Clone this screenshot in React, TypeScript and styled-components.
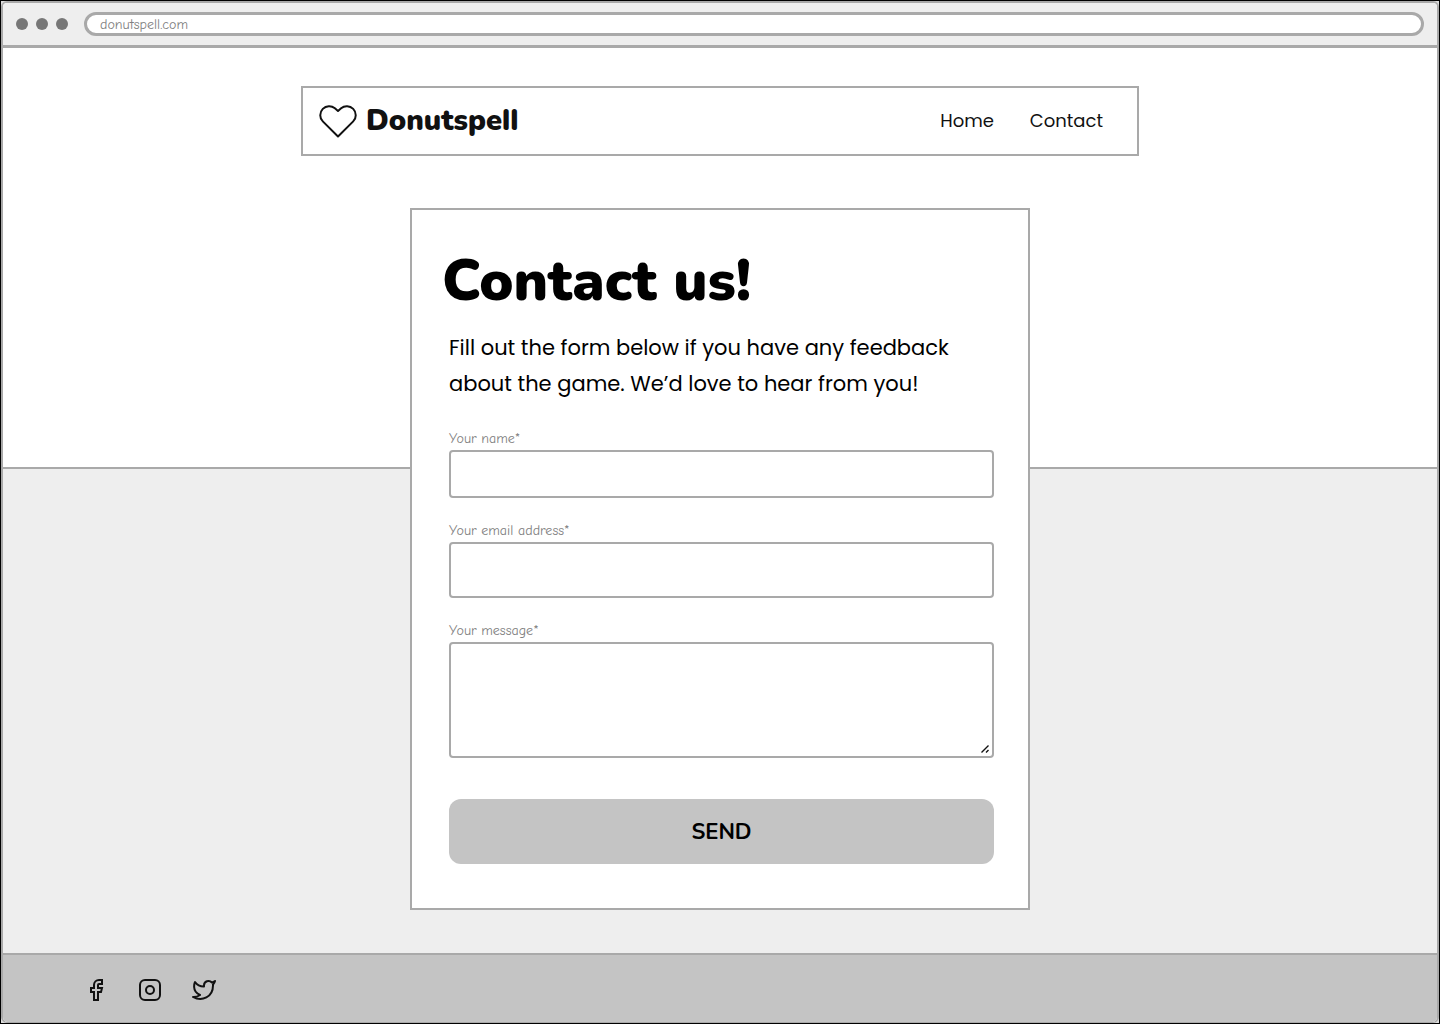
import React from "react";
import styled, { createGlobalStyle } from "styled-components";

const line = "#a9a9a9";
const display = `Nunito, Lato, "Open Sans", sans-serif`;
const copy = `Poppins, Inter, "Liberation Sans", sans-serif`;
const hand = `"Comic Neue", "Open Sans", "Noto Sans", sans-serif`;

const GlobalStyle = createGlobalStyle`
  *, *::before, *::after { box-sizing: border-box; }
  body { margin: 0; background: #fff; color: #000; font-family: ${copy}; }
`;

const Outline = styled.div`
  display: flex;
  flex-direction: column;
  min-height: 100vh;
  border: 1px solid #000;
  background: #ddd;
`;

const BrowserFrame = styled.div`
  flex: 1;
  display: flex;
  flex-direction: column;
  border: 2px solid ${line};
  border-bottom-width: 1px;
  border-radius: 6px;
  background: #fff;
  overflow: hidden;
`;

const BrowserBar = styled.div`
  display: flex;
  align-items: center;
  gap: 16px;
  height: 45px;
  padding: 0 13px;
  background: #eee;
  border-bottom: 3px solid ${line};
`;

const Dots = styled.div`
  display: flex;
  gap: 8px;
`;

const Dot = styled.span`
  width: 12px;
  height: 12px;
  border-radius: 50%;
  background: #777;
`;

const Address = styled.input`
  flex: 1;
  min-width: 0;
  height: 24px;
  padding: 0 13px;
  border: 3px solid ${line};
  border-radius: 12px;
  background: #fff;
  color: #808080;
  font: 400 14px/18px ${hand};
`;

const Main = styled.main`
  flex: 1;
  display: flex;
  flex-direction: column;
  align-items: center;
  gap: 52px;
  padding: 38px 24px 43px;
  background: linear-gradient(#fff 419px, ${line} 419px 421px, #eee 421px);
`;

const SiteHeader = styled.header`
  display: flex;
  align-items: center;
  justify-content: space-between;
  width: 100%;
  max-width: 838px;
  height: 70px;
  padding: 0 34px 0 15px;
  border: 2px solid ${line};
  background: #fff;
`;

const Brand = styled.a`
  display: flex;
  align-items: center;
  gap: 8px;
  color: #111;
  font: 900 29px/40px ${display};
  font-feature-settings: "ss01", "ss02";
  text-decoration: none;
`;

const Nav = styled.nav`
  display: flex;
  gap: 36px;
`;

const NavLink = styled.a`
  color: #111;
  font-size: 18px;
  line-height: 28px;
  text-decoration: none;
`;

const Card = styled.section`
  width: 100%;
  max-width: 620px;
  padding: 35px 34px 44px 30px;
  border: 2px solid ${line};
  background: #fff;
`;

const Title = styled.h1`
  margin: 0;
  font: 900 57px/72px ${display};
`;

const CardBody = styled.div`
  display: flex;
  flex-direction: column;
  gap: 26px;
  padding: 13px 0 0 7px;
`;

const Intro = styled.p`
  margin: 0;
  font-size: 21px;
  line-height: 36px;
`;

const Form = styled.form`
  display: flex;
  flex-direction: column;
  gap: 22px;
`;

const Field = styled.div`
  display: flex;
  flex-direction: column;
`;

const Label = styled.label`
  color: #808080;
  font: 400 14px/22px ${hand};
`;

const TextInput = styled.input<{ $height: number }>`
  height: ${(p) => p.$height}px;
  padding: 0 12px;
  border: 2px solid ${line};
  border-radius: 4px;
  background: #fff;
  font: 18px/28px ${copy};
`;

const MessageBox = styled.textarea`
  height: 116px;
  padding: 8px 12px;
  border: 2px solid ${line};
  border-radius: 4px;
  background: #fff;
  font: 18px/28px ${copy};
  resize: vertical;

  &::-webkit-resizer {
    background: url("data:image/svg+xml,%3Csvg xmlns='http://www.w3.org/2000/svg' width='15' height='15' stroke='%23111' stroke-width='1.4'%3E%3Cpath d='M4.5 11.5l7-7M9 11.5l2.5-2.5'/%3E%3C/svg%3E") no-repeat;
  }
`;

const SendButton = styled.button`
  height: 65px;
  margin-top: 19px;
  border: 0;
  border-radius: 12px;
  background: #c4c4c4;
  color: #000;
  font: 700 22px/32px ${display};
`;

const Footer = styled.footer`
  display: flex;
  align-items: center;
  gap: 30px;
  height: 69px;
  padding: 2px 81px 0;
  background: #c4c4c4;
  border-top: 2px solid ${line};
`;

const SocialLink = styled.a`
  display: flex;
  color: #111;
`;

const SocialIcon = styled.svg.attrs({
  width: 24,
  height: 24,
  viewBox: "0 0 24 24",
  fill: "none",
  stroke: "currentColor",
  strokeWidth: 2,
  "aria-hidden": true,
})``;

const HeartIcon = () => (
  <svg width="40" height="36" viewBox="0 0 40 36" fill="none" stroke="#111" strokeWidth="2" strokeLinejoin="round" aria-hidden="true">
    <path d="M20 33.5 4.8 18.4C1.4 15 1.4 9.4 4.8 5.9S13.4 2.4 16.9 5.2L20 8 23.1 5.2C26.6 2.4 31.8 2.5 35.2 5.9S38.6 15 35.2 18.4Z" />
  </svg>
);

export default function App() {
  return (
    <Outline>
      <GlobalStyle />
      <BrowserFrame>
        <BrowserBar>
          <Dots>
            <Dot />
            <Dot />
            <Dot />
          </Dots>
          <Address aria-label="Address" defaultValue="donutspell.com" />
        </BrowserBar>
        <Main>
          <SiteHeader>
            <Brand href="#home">
              <HeartIcon />
              Donutspell
            </Brand>
            <Nav>
              <NavLink href="#home">Home</NavLink>
              <NavLink href="#contact">Contact</NavLink>
            </Nav>
          </SiteHeader>
          <Card id="contact">
            <Title>Contact us!</Title>
            <CardBody>
              <Intro>
                Fill out the form below if you have any feedback about the game. We’d love to hear from you!
              </Intro>
              <Form onSubmit={(e) => e.preventDefault()}>
                <Field>
                  <Label htmlFor="name">Your name*</Label>
                  <TextInput id="name" $height={48} required />
                </Field>
                <Field>
                  <Label htmlFor="email">Your email address*</Label>
                  <TextInput id="email" type="email" $height={56} required />
                </Field>
                <Field>
                  <Label htmlFor="message">Your message*</Label>
                  <MessageBox id="message" required />
                </Field>
                <SendButton type="submit">SEND</SendButton>
              </Form>
            </CardBody>
          </Card>
        </Main>
        <Footer>
          <SocialLink href="#facebook" aria-label="Facebook">
            <SocialIcon>
              <path d="M18 2h-3a5 5 0 0 0-5 5v3H7v4h3v8h4v-8h3l1-4h-4V7a1 1 0 0 1 1-1h3z" />
            </SocialIcon>
          </SocialLink>
          <SocialLink href="#instagram" aria-label="Instagram">
            <SocialIcon>
              <rect x="2" y="2" width="20" height="20" rx="5" />
              <circle cx="12" cy="12" r="4" />
            </SocialIcon>
          </SocialLink>
          <SocialLink href="#twitter" aria-label="Twitter">
            <SocialIcon strokeLinejoin="round">
              <path d="M23 3a10.9 10.9 0 0 1-3.14 1.53 4.48 4.48 0 0 0-7.86 3v1A10.66 10.66 0 0 1 3 4s-4 9 5 13a11.64 11.64 0 0 1-7 2c9 5 20 0 20-11.5a4.5 4.5 0 0 0-.08-.83A7.72 7.72 0 0 0 23 3z" />
            </SocialIcon>
          </SocialLink>
        </Footer>
      </BrowserFrame>
    </Outline>
  );
}
